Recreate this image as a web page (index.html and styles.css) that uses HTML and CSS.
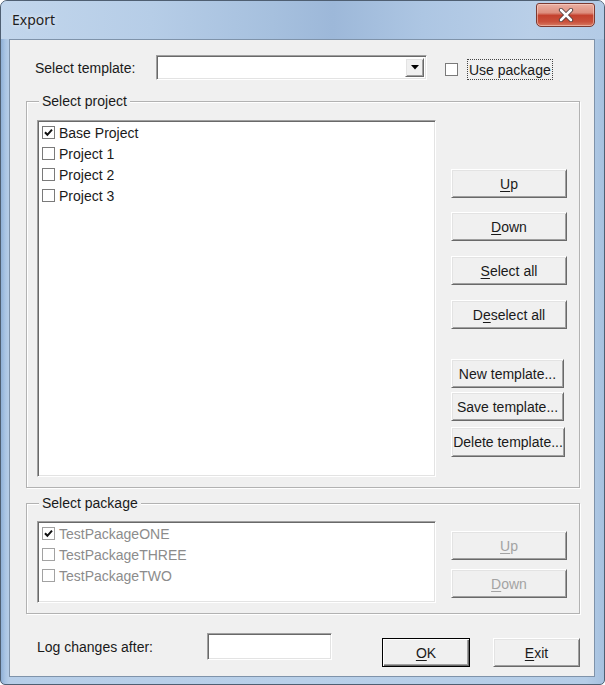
FILE: index.html
```html
<!DOCTYPE html>
<html>
<head>
<meta charset="utf-8">
<title>Export</title>
<link rel="stylesheet" href="styles.css">
</head>
<body>
<div class="window">
  <div class="titlebar">
    <span class="title">Export</span>
    <div class="close">
      <svg width="16" height="14" viewBox="0 0 16 14"><path d="M3 2 L13 12 M13 2 L3 12" stroke="#4a3a3a" stroke-width="4.2" stroke-linecap="round"/><path d="M3 2 L13 12 M13 2 L3 12" stroke="#ffffff" stroke-width="2.6" stroke-linecap="round"/></svg>
    </div>
  </div>
  <div class="frame-body">
    <div class="client">
      <div class="tpl-row">
        <span class="tpl-label">Select template:</span>
        <div class="combo sunken">
          <div class="combo-btn raised">
            <svg width="8" height="5" viewBox="0 0 8 5"><path d="M0 0 H8 L4 4.5 Z" fill="#000"/></svg>
          </div>
        </div>
        <div class="use-pkg">
          <span class="cb"></span>
          <span class="focus">Use package</span>
        </div>
      </div>

      <fieldset class="group project">
        <legend>Select project</legend>
        <div class="group-body">
          <div class="listbox sunken project-list">
            <div class="item"><span class="cb"><svg width="11" height="11" viewBox="0 0 11 11"><path d="M2 5.2 L4.4 7.8 L9 2.6" fill="none" stroke="#111" stroke-width="2"/></svg></span>Base Project</div>
            <div class="item"><span class="cb"></span>Project 1</div>
            <div class="item"><span class="cb"></span>Project 2</div>
            <div class="item"><span class="cb"></span>Project 3</div>
          </div>
          <div class="btn-col project-btns">
            <button class="btn raised"><u>U</u>p</button>
            <button class="btn raised gap-14"><u>D</u>own</button>
            <button class="btn raised gap-15"><u>S</u>elect all</button>
            <button class="btn raised gap-15">D<u>e</u>select all</button>
            <button class="btn raised narrow gap-30">New template...</button>
            <button class="btn raised narrow gap-4">Save template...</button>
            <button class="btn raised narrow tall gap-6">Delete template...</button>
          </div>
        </div>
      </fieldset>

      <fieldset class="group package">
        <legend>Select package</legend>
        <div class="group-body">
          <div class="listbox sunken package-list">
            <div class="item dim"><span class="cb"><svg width="11" height="11" viewBox="0 0 11 11"><path d="M2 5.2 L4.4 7.8 L9 2.6" fill="none" stroke="#111" stroke-width="2"/></svg></span>TestPackageONE</div>
            <div class="item dim"><span class="cb"></span>TestPackageTHREE</div>
            <div class="item dim"><span class="cb"></span>TestPackageTWO</div>
          </div>
          <div class="btn-col package-btns">
            <button class="btn raised disabled"><u>U</u>p</button>
            <button class="btn raised disabled gap-9"><u>D</u>own</button>
          </div>
        </div>
      </fieldset>

      <div class="bottom-row">
        <span class="log-label">Log changes after:</span>
        <div class="log-input sunken"></div>
        <button class="btn raised default ok"><u>O</u>K</button>
        <button class="btn raised exit"><u>E</u>xit</button>
      </div>
    </div>
  </div>
</div>
</body>
</html>
```

FILE: styles.css
```css
* { box-sizing: border-box; }

html, body {
  margin: 0;
  padding: 0;
}

body {
  width: 605px;
  height: 685px;
  overflow: hidden;
  background: #ffffff;
  font-family: "Liberation Sans", Arial, sans-serif;
  font-size: 14px;
  color: #1a1a1a;
}

.window {
  width: 605px;
  height: 685px;
  display: flex;
  flex-direction: column;
  border: 1px solid #4f5f72;
  border-radius: 7px 7px 5px 5px;
  overflow: hidden;
  background: linear-gradient(90deg, #8fb0d6 0px, #a9c4e3 4px, #b7cee8 8px, #b9d0e9 50%, #b5cde7 97%, #a6c1df 100%);
}

.titlebar {
  height: 38px;
  display: flex;
  align-items: flex-start;
  background: linear-gradient(90deg, #c2d6ec 0%, #b6cde7 25%, #a6c0de 45%, #9db8d9 55%, #adc6e3 70%, #b9cfe8 88%, #b3cbe6 100%);
}

.title {
  font-family: "Noto Sans", "Open Sans", sans-serif;
  font-size: 14px;
  line-height: 20px;
  margin: 9px 0 0 11px;
  color: #1e1e1e;
  text-shadow: 0 0 5px rgba(255, 255, 255, 0.9);
}

.close {
  margin: 2px 9px 0 auto;
  width: 59px;
  height: 24px;
  border: 1px solid #7c3a31;
  border-radius: 3px 3px 5px 5px;
  background: linear-gradient(180deg, #eab0a3 0%, #dd8e7e 40%, #c4412e 52%, #c9503b 80%, #d77b63 100%);
  box-shadow: inset 0 0 0 1px rgba(255, 220, 210, 0.5);
  display: flex;
  align-items: center;
  justify-content: center;
}

.frame-body {
  flex: 1;
  display: flex;
  padding: 0 9px 7px 8px;
}

.client {
  flex: 1;
  display: flex;
  flex-direction: column;
  border: 1px solid #7f93aa;
  background: #f0f0f0;
}

/* 3D borders */
.sunken {
  background: #ffffff;
  border: 1px solid;
  border-color: #a0a0a0 #ffffff #ffffff #a0a0a0;
  box-shadow: inset 1px 1px 0 #696969, inset -1px -1px 0 #e3e3e3;
}

.raised {
  background: #f0f0f0;
  border: 1px solid;
  border-color: #ffffff #696969 #696969 #ffffff;
  box-shadow: inset 1px 1px 0 #e3e3e3, inset -1px -1px 0 #a0a0a0;
}

/* template row */
.tpl-row {
  display: flex;
  align-items: flex-start;
  margin-top: 15px;
  height: 25px;
  padding-left: 25px;
}

.tpl-label {
  width: 121px;
  margin-top: 5px;
  line-height: 16px;
}

.combo {
  width: 271px;
  height: 25px;
  display: flex;
  justify-content: flex-end;
  padding: 2px;
}

.combo-btn {
  width: 19px;
  height: 100%;
  display: flex;
  align-items: center;
  justify-content: center;
}

.use-pkg {
  display: flex;
  align-items: center;
  margin-left: 18px;
  margin-top: 4px;
}

.cb {
  width: 13px;
  height: 13px;
  flex: none;
  border: 1px solid #7a7a7a;
  background: #ffffff;
  display: flex;
  align-items: center;
  justify-content: center;
}

.focus {
  margin-left: 9px;
  border: 1px dotted #444;
  padding: 2px 1px 1px 1px;
  line-height: 16px;
  height: 21px;
}

/* groups */
.group {
  margin: 0 14px 0 16px;
  border: 1px solid #b2b2b2;
  box-shadow: inset 1px 1px 0 #ffffff, 1px 1px 0 #ffffff;
  padding: 11px 12px 10px 10px;
  min-width: 0;
}

.group legend {
  padding: 0 3px;
  margin-left: 2px;
  line-height: 16px;
  background: #f0f0f0;
  color: #1a1a1a;
}

.project {
  margin-top: 13px;
}

.package {
  margin-top: 7px;
  padding-top: 10px;
}

.group-body {
  display: flex;
  align-items: flex-start;
}

.listbox {
  width: 399px;
  padding: 1px 0 0 4px;
}

.project-list {
  height: 357px;
}

.package-list {
  height: 82px;
}

.item {
  display: flex;
  align-items: center;
  height: 21px;
  white-space: nowrap;
}

.item .cb {
  margin-right: 4px;
}

.item.dim {
  color: #8c8c8c;
}

.item.dim .cb {
  border-color: #a2a2a2;
}

.btn-col {
  display: flex;
  flex-direction: column;
  align-items: flex-start;
  margin-left: 15px;
}

.project-btns {
  padding-top: 49px;
}

.package-btns {
  padding-top: 10px;
}

.btn {
  width: 116px;
  height: 29px;
  padding: 0;
  font-family: "Liberation Sans", Arial, sans-serif;
  font-size: 14px;
  color: #1a1a1a;
  text-align: center;
  line-height: 16px;
}

.btn u {
  text-underline-offset: 2px;
}

.btn.narrow {
  width: 113px;
}

.btn.tall {
  width: 114px;
  height: 30px;
}

.btn.disabled {
  color: #a3a3a3;
}

.gap-4 { margin-top: 4px; }
.gap-6 { margin-top: 6px; }
.gap-9 { margin-top: 9px; }
.gap-14 { margin-top: 14px; }
.gap-15 { margin-top: 15px; }
.gap-30 { margin-top: 30px; }

/* bottom row */
.bottom-row {
  display: flex;
  align-items: flex-start;
  margin-top: 19px;
  padding-left: 27px;
}

.log-label {
  width: 170px;
  margin-top: 6px;
  line-height: 16px;
}

.log-input {
  width: 125px;
  height: 27px;
}

.btn.ok {
  width: 88px;
  margin-left: 50px;
  margin-top: 5px;
}

.btn.default {
  border: 1px solid #000;
  box-shadow: inset 1px 1px 0 #ffffff, inset -1px -1px 0 #696969, inset -2px -2px 0 #a0a0a0;
}

.btn.exit {
  width: 87px;
  margin-left: 23px;
  margin-top: 5px;
}
```
